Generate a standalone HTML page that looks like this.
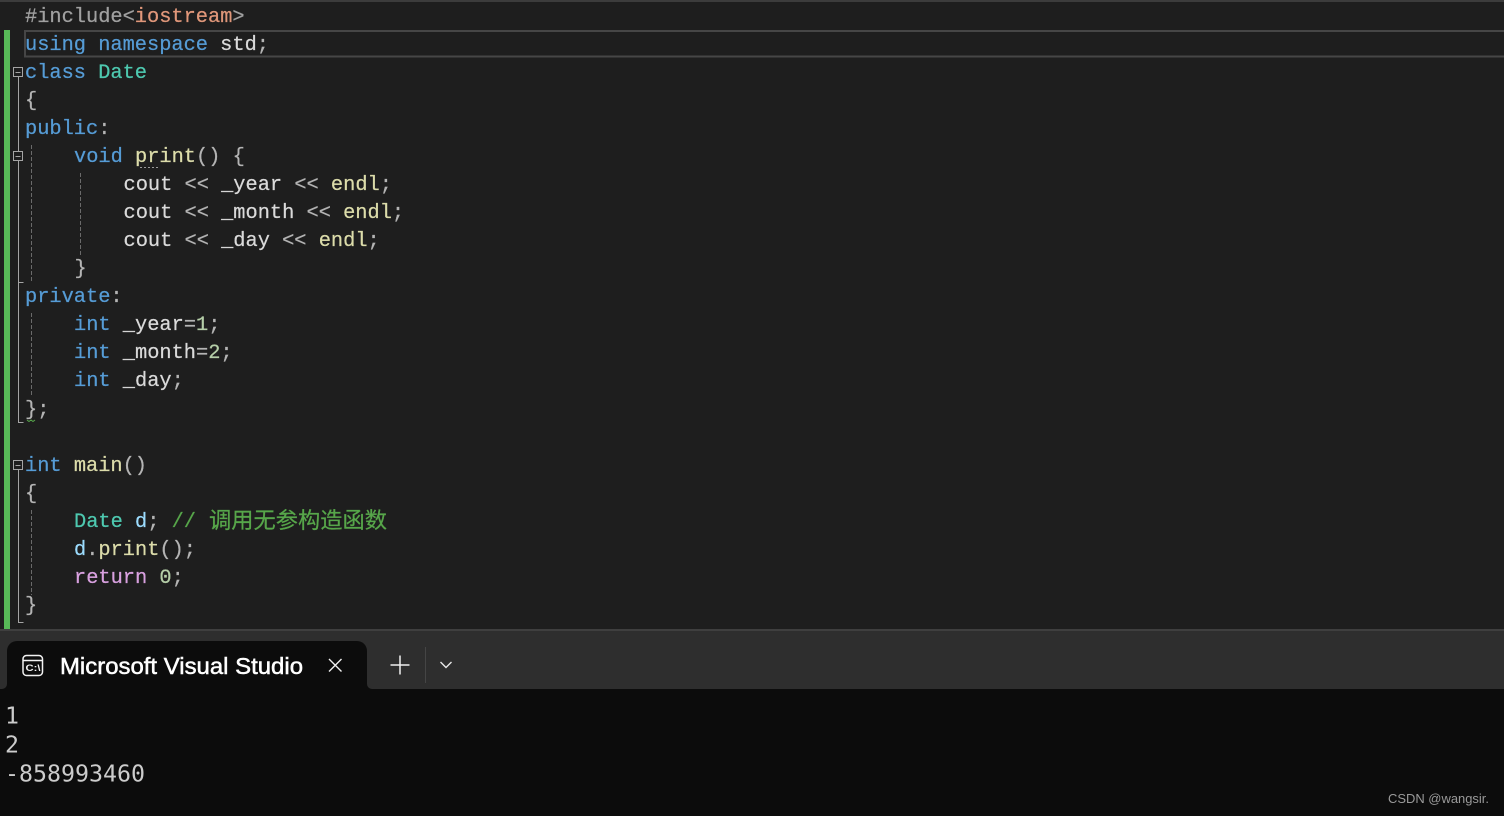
<!DOCTYPE html>
<html><head><meta charset="utf-8"><title>Code</title>
<style>
html,body{margin:0;padding:0;background:#1e1e1e;width:1504px;height:816px;overflow:hidden}
svg{display:block}
.c text{font-family:"Liberation Mono","Noto Sans CJK SC",monospace;font-size:20.33px;white-space:pre;color:#dadada;fill:currentColor;stroke:currentColor;stroke-width:.22px}
.c tspan{fill:currentColor;stroke:currentColor}
.k{color:#569cd6}.t{color:#4ec9b0}.f{color:#dcdcaa}.p{color:#b4b4b4}.v{color:#9cdcfe}.n{color:#b5cea8}.r{color:#d8a0df}.h{color:#a0a0a0}.s{color:#e0977a}
.c .g{color:#57a64a}
</style></head><body>
<svg width="1504" height="816" viewBox="0 0 1504 816" xmlns="http://www.w3.org/2000/svg">
<rect width="1504" height="816" fill="#1e1e1e"/>
<rect width="1504" height="2" fill="#3c3c3c"/>
<rect x="4" y="30" width="6" height="599" fill="#57b857"/>
<rect x="25" y="31" width="1480" height="25.5" fill="none" stroke="#464646" stroke-width="2"/>

<!-- outline -->
<g fill="none" stroke="#a5a5a5" stroke-width="1">
<rect x="13.5" y="67.5" width="9" height="9" fill="#1e1e1e"/><path d="M15.5 72.5h5"/>
<rect x="13.5" y="151.5" width="9" height="9" fill="#1e1e1e"/><path d="M15.5 156.5h5"/>
<rect x="13.5" y="460.5" width="9" height="9" fill="#1e1e1e"/><path d="M15.5 465.5h5"/>
<path d="M18.5 77v74M18.5 161v121.500h5M18.5 282v140.500h5M18.5 470v152.500h5"/>
</g>
<g fill="none" stroke="#6a6a6a" stroke-width="1" stroke-dasharray="4 2">
<path d="M31.500 145v137M31.500 313v83M80.500 173v83M31.500 510v85"/>
</g>

<g class="c">
<text x="25" y="22"><tspan class="h">#include&lt;</tspan><tspan class="s">iostream</tspan><tspan class="h">&gt;</tspan></text>
<text x="25" y="50"><tspan class="k">using namespace</tspan> std<tspan class="p">;</tspan></text>
<text x="25" y="78"><tspan class="k">class</tspan> <tspan class="t">Date</tspan></text>
<text x="25" y="106"><tspan class="p">{</tspan></text>
<text x="25" y="134"><tspan class="k">public</tspan><tspan class="p">:</tspan></text>
<text x="74" y="162"><tspan class="k">void</tspan> <tspan class="f">print</tspan><tspan class="p">() {</tspan></text>
<text x="123.500" y="190">cout <tspan class="p">&lt;&lt;</tspan> _year <tspan class="p">&lt;&lt;</tspan> <tspan class="f">endl</tspan><tspan class="p">;</tspan></text>
<text x="123.500" y="218">cout <tspan class="p">&lt;&lt;</tspan> _month <tspan class="p">&lt;&lt;</tspan> <tspan class="f">endl</tspan><tspan class="p">;</tspan></text>
<text x="123.500" y="246">cout <tspan class="p">&lt;&lt;</tspan> _day <tspan class="p">&lt;&lt;</tspan> <tspan class="f">endl</tspan><tspan class="p">;</tspan></text>
<text x="74.500" y="274"><tspan class="p">}</tspan></text>
<text x="25" y="302"><tspan class="k">private</tspan><tspan class="p">:</tspan></text>
<text x="74" y="330"><tspan class="k">int</tspan> _year<tspan class="p">=</tspan><tspan class="n">1</tspan><tspan class="p">;</tspan></text>
<text x="74" y="358"><tspan class="k">int</tspan> _month<tspan class="p">=</tspan><tspan class="n">2</tspan><tspan class="p">;</tspan></text>
<text x="74" y="386"><tspan class="k">int</tspan> _day<tspan class="p">;</tspan></text>
<text x="25" y="415"><tspan class="p">};</tspan></text>
<text x="25" y="471"><tspan class="k">int</tspan> <tspan class="f">main</tspan><tspan class="p">()</tspan></text>
<text x="25" y="499"><tspan class="p">{</tspan></text>
<text x="74" y="527"><tspan class="t">Date</tspan> <tspan class="v">d</tspan><tspan class="p">;</tspan> <tspan class="g">//</tspan></text>
<text x="209" y="528" class="g" style="font-family:'Noto Sans CJK SC',sans-serif;font-size:22.250px">调用无参构造函数</text>
<text x="74" y="555"><tspan class="v">d</tspan><tspan class="p">.</tspan><tspan class="f">print</tspan><tspan class="p">();</tspan></text>
<text x="74" y="583"><tspan class="r">return</tspan> <tspan class="n">0</tspan><tspan class="p">;</tspan></text>
<text x="25" y="611"><tspan class="p">}</tspan></text>
</g>

<path d="M140 167.500h18" stroke="#9a9a9a" stroke-width="1" stroke-dasharray="2 2"/>
<path d="M27 420l2 1.500 2-1.500 2 1.500 2-1.500" fill="none" stroke="#57a64a" stroke-width="1"/>

<!-- terminal -->
<rect x="0" y="629" width="1504" height="2" fill="#3f3f3f"/>
<rect x="0" y="631" width="1504" height="58" fill="#2e2e2e"/>
<rect x="0" y="689" width="1504" height="127" fill="#0c0c0c"/>
<path d="M7 689V651a10 10 0 0 1 10-10H357a10 10 0 0 1 10 10V689Z" fill="#0c0c0c"/>
<path d="M0 689h2a5 5 0 0 0 5-5V689Z" fill="#0c0c0c"/>
<path d="M367 684a5 5 0 0 0 5 5h-5Z" fill="#0c0c0c"/>

<!-- icon -->
<rect x="23" y="655.500" width="19.500" height="20" rx="3.500" fill="none" stroke="#f2f2f2" stroke-width="1.500"/>
<path d="M23 660.500h19.500" stroke="#f2f2f2" stroke-width="1.500"/>
<text x="25.500" y="671" font-family="Liberation Sans,sans-serif" font-size="9" font-weight="700" fill="#f2f2f2" textLength="15" lengthAdjust="spacingAndGlyphs">C:\</text>

<text x="60" y="674" font-family="Liberation Sans,sans-serif" font-size="23px" stroke="#ffffff" stroke-width="0.5" fill="#ffffff" textLength="243" lengthAdjust="spacingAndGlyphs">Microsoft Visual Studio</text>

<path d="M329 659l12.500 12.500M341.500 659L329 671.500" stroke="#f0f0f0" stroke-width="1.400" fill="none"/>
<path d="M390.500 665h19M400 655.500v19" stroke="#efefef" stroke-width="1.500" fill="none"/>
<rect x="425" y="647" width="1" height="36" fill="#454545"/>
<path d="M440.500 662l5.500 5.500 5.500-5.500" stroke="#e8e8e8" stroke-width="1.400" fill="none"/>

<g font-family="DejaVu Sans Mono,monospace" font-size="23.250px" fill="#cccccc">
<text x="5" y="723.500">1</text>
<text x="5" y="752.500">2</text>
<text x="5" y="781.500">-858993460</text>
</g>
<text x="1388" y="803" font-family="Liberation Sans,sans-serif" font-size="13px" fill="#9a9a9a" textLength="101" lengthAdjust="spacingAndGlyphs">CSDN @wangsir.</text>
</svg>
</body></html>
